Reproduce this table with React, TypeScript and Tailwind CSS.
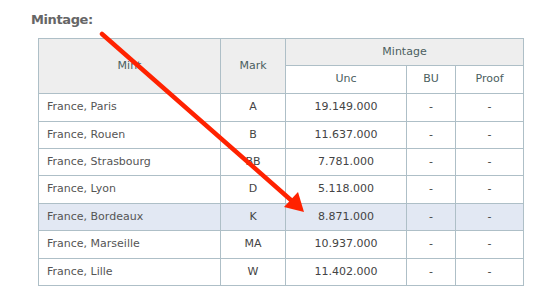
const rows = [
  { mint: 'France, Paris', mark: 'A', unc: '19.149.000', h: 'h-[28px]' },
  { mint: 'France, Rouen', mark: 'B', unc: '11.637.000', h: 'h-[27px]' },
  { mint: 'France, Strasbourg', mark: 'BB', unc: '7.781.000', h: 'h-[27px]' },
  { mint: 'France, Lyon', mark: 'D', unc: '5.118.000', h: 'h-[28px]' },
  { mint: 'France, Bordeaux', mark: 'K', unc: '8.871.000', h: 'h-[27px]', hl: true },
  { mint: 'France, Marseille', mark: 'MA', unc: '10.937.000', h: 'h-[28px]' },
  { mint: 'France, Lille', mark: 'W', unc: '11.402.000', h: 'h-[27px]' },
]

const cell = 'border border-[#aebfc7] p-0'

export default function App() {
  return (
    <div className="relative w-[554px] h-[297px] bg-white font-['DejaVu_Sans',Verdana,sans-serif] overflow-hidden">
      <h2 className="absolute left-[31px] top-[13px] text-[13px] font-bold tracking-[-0.4px] text-[#666] leading-none">
        Mintage:
      </h2>

      <div className="pt-[38px] pl-[38px]">
        <table className="border-collapse table-fixed text-[11px] w-[485px]">
          <colgroup>
            <col className="w-[182px]" />
            <col className="w-[65px]" />
            <col className="w-[121px]" />
            <col className="w-[49px]" />
            <col className="w-[68px]" />
          </colgroup>
          <thead className="text-[#4b5e60] font-normal">
            <tr className="h-[27px]">
              <th rowSpan={2} className={`${cell} bg-[#eeeeee] font-normal`}>Mint</th>
              <th rowSpan={2} className={`${cell} bg-[#eeeeee] font-normal`}>Mark</th>
              <th colSpan={3} className={`${cell} bg-[#eeeeee] font-normal`}>Mintage</th>
            </tr>
            <tr className="h-[28px]">
              <th className={`${cell} font-normal`}>Unc</th>
              <th className={`${cell} font-normal`}>BU</th>
              <th className={`${cell} font-normal`}>Proof</th>
            </tr>
          </thead>
          <tbody>
            {rows.map((r) => (
              <tr key={r.mint} className={`${r.h} ${r.hl ? 'bg-[#e2e8f3]' : ''}`}>
                <td className={`${cell} pl-[8px] text-[#555]`}>{r.mint}</td>
                <td className={`${cell} text-center text-[#444]`}>{r.mark}</td>
                <td className={`${cell} text-center text-[#444]`}>{r.unc}</td>
                <td className={`${cell} text-center text-[#444]`}>-</td>
                <td className={`${cell} text-center text-[#444]`}>-</td>
              </tr>
            ))}
          </tbody>
        </table>
      </div>

      {/* annotation arrow */}
      <svg className="absolute left-0 top-0 pointer-events-none" width="554" height="297" viewBox="0 0 554 297">
        <line x1="102" y1="34" x2="292" y2="201" stroke="#ff2200" strokeWidth="4.5" strokeLinecap="round" />
        <polygon points="304,212 284,207 298,192" fill="#ff2200" />
      </svg>
    </div>
  )
}
